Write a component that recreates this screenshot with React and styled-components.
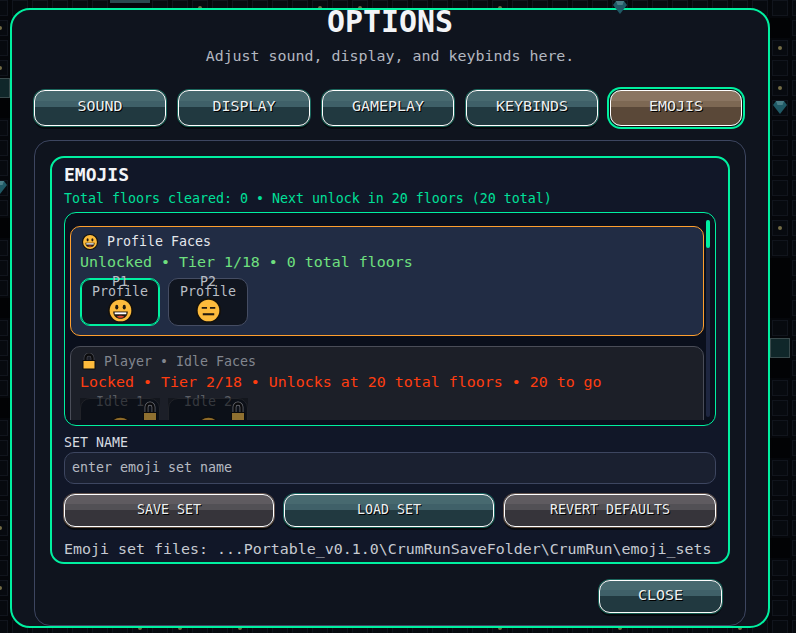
import React from 'react'
import styled, { createGlobalStyle, css } from 'styled-components'

const GREEN = '#00f0a0'

const GlobalStyle = createGlobalStyle`
  html, body {
    margin: 0;
    padding: 0;
    background: #05070b;
    overflow: hidden;
  }
  * { box-sizing: border-box; }
`

const Page = styled.div`
  position: relative;
  width: 796px;
  height: 633px;
  overflow: hidden;
  padding: 8px 26px 5px 10px;
  font-family: "DejaVu Sans Mono", "Liberation Mono", monospace;
`

/* game floor showing behind the dialog */
const Board = styled.div`
  position: absolute;
  left: -10px;
  top: -2px;
  display: grid;
  grid-template-columns: repeat(41, 20px);
  grid-auto-rows: 20px;
`

const Cell = styled.div`
  position: relative;
  ${p => p.$kind === 'black' && css`
    background: #020305;
  `}
  ${p => p.$kind === 'teal' && css`
    background: #10272a;
    border: 1px solid #3a4a4c;
  `}
  ${p => (p.$kind === 'tile' || p.$kind === 'dot' || p.$kind === 'gem') && css`
    &::before {
      content: '';
      position: absolute;
      inset: 2px;
      border: 1px solid #11151d;
      background: #070a0f;
    }
  `}
  ${p => p.$kind === 'slab' && css`
    background: linear-gradient(#2a4a50 5px, transparent 5px);
  `}
  ${p => p.$kind === 'dot' && css`
    &::after {
      content: '';
      position: absolute;
      left: 8px;
      top: 8px;
      width: 4px;
      height: 4px;
      border-radius: 50%;
      background: #736c45;
    }
  `}
`

const Gem = styled.svg`
  position: absolute;
  left: 3px;
  top: 2px;
  z-index: 1;
`

const Modal = styled.div`
  position: relative;
  width: 760px;
  height: 620px;
  overflow: hidden;
  display: flex;
  flex-direction: column;
  padding: 0 22px;
  background: #0f141e;
  border: 2px solid ${GREEN};
  border-radius: 20px;
`

const Title = styled.h1`
  margin: 0;
  font-size: 29.9px;
  line-height: 24px;
  font-weight: 700;
  text-align: center;
  color: #f3f4f7;
`

const Subtitle = styled.p`
  margin: 13px 0 0;
  font-size: 14.95px;
  line-height: 18px;
  text-align: center;
  color: #b3b7c0;
`

const Tabs = styled.div`
  display: flex;
  gap: 12px;
  margin-top: 25px;
`

const palettes = {
  teal: { light: '#47696f', mid: '#3f6068', dark: '#213940', edge: '#2ee0b8' },
  warm: { light: '#5f5b60', mid: '#525055', dark: '#36343a', edge: '#e0b48a' },
  active: { light: '#8a7561', mid: '#7d6853', dark: '#5a4838', edge: '#f0c8a0' },
}

const Button = styled.button`
  flex: 0 0 auto;
  width: ${p => p.$width}px;
  height: ${p => p.$height}px;
  padding: 0 0 ${p => p.$lift}px;
  font-family: inherit;
  font-size: ${p => p.$size}px;
  color: #eef1f2;
  text-shadow: 1px 1px 0 #000;
  border-radius: 11px;
  border: 1px solid #ffffff;
  background: linear-gradient(
    ${p => palettes[p.$tone].light} 0,
    ${p => palettes[p.$tone].light} 30%,
    ${p => palettes[p.$tone].mid} 30%,
    ${p => palettes[p.$tone].mid} 47%,
    ${p => palettes[p.$tone].dark} 47%
  );
  box-shadow: 0 0 0 1px ${p => palettes[p.$tone].edge}66, 0 3px 0 #05080d;
  ${p => p.$selected && css`
    box-shadow: 0 0 0 1px #0a0e14, 0 0 0 3px ${GREEN};
  `}
`

const Panel = styled.div`
  flex: 1;
  display: flex;
  flex-direction: column;
  margin-top: 14px;
  padding: 15px 15px 12px;
  border: 1px solid #3d4660;
  border-radius: 16px;
`

const EmojiBox = styled.section`
  display: flex;
  flex-direction: column;
  padding: 6px 12px 4px;
  background: #111728;
  border: 2px solid ${GREEN};
  border-radius: 14px;
`

const BoxTitle = styled.h2`
  margin: 0;
  font-size: 18px;
  line-height: 22px;
  font-weight: 700;
  color: #f3f4f7;
`

const FloorsLine = styled.div`
  margin-top: 4px;
  font-size: 13.29px;
  line-height: 18px;
  color: #00e09a;
`

const ListBox = styled.div`
  display: flex;
  gap: 2px;
  height: 214px;
  margin-top: 4px;
  padding: 7px 5px 5px;
  background: #0a0f1c;
  border: 1px solid ${GREEN};
  border-radius: 12px;
`

const Cards = styled.div`
  flex: 1;
  min-width: 0;
  overflow: hidden;
  display: flex;
  flex-direction: column;
  gap: 10px;
  padding-top: 6px;
`

const Track = styled.div`
  flex: 0 0 4px;
  height: 197px;
  background: #1e2640;
  border-radius: 2px;
`

const Thumb = styled.div`
  height: 28px;
  background: ${GREEN};
  border-radius: 2px;
`

const Card = styled.article`
  flex: 0 0 auto;
  padding: 6px 9px 9px;
  border-radius: 10px;
  border: 1px solid ${p => (p.$locked ? '#4a4d58' : '#ff9f2e')};
  background: ${p => (p.$locked ? '#1c1f28' : '#212c44')};
`

const CardHead = styled.div`
  display: flex;
  align-items: center;
  gap: ${p => (p.$locked ? 8 : 9)}px;
  height: 17px;
  padding-left: 2px;
  font-size: 13.29px;
  line-height: 17px;
  color: ${p => (p.$locked ? '#82868f' : '#e4e7ec')};
`

const Status = styled.div`
  margin-top: 3px;
  font-size: 14.95px;
  line-height: 18px;
  color: ${p => (p.$locked ? '#ff3d10' : '#6fe07f')};
`

const Tiles = styled.div`
  display: flex;
  gap: 8px;
  margin-top: 7px;
`

const Tile = styled.div`
  position: relative;
  width: 80px;
  height: 48px;
  display: flex;
  flex-direction: column;
  align-items: center;
  border-radius: 10px;
  border: 1px solid ${p => (p.$locked ? '#33353d' : '#454d63')};
  background: #10151f;
  font-size: 13.29px;
  line-height: 12px;
  color: ${p => (p.$locked ? '#5a5d64' : '#b9bdc5')};
  ${p => p.$selected && css`
    border-color: ${GREEN};
    box-shadow: inset 0 0 0 1px ${GREEN};
  `}
`

const TileLabel = styled.span`
  display: block;
  height: 10px;
  white-space: nowrap;
  &:first-child {
    margin-top: -3px;
  }
`

const TileFace = styled.span`
  display: block;
  margin-top: ${p => (p.$locked ? 0 : 2)}px;
  line-height: 0;
`

const Veil = styled.div`
  position: absolute;
  inset: -1px;
  background: rgba(8, 10, 15, 0.45);
`

const VeilLock = styled.svg`
  position: absolute;
  right: 3px;
  top: 2px;
`

const FieldLabel = styled.label`
  display: block;
  margin-top: 9px;
  font-size: 13.29px;
  line-height: 16px;
  color: #d8dbe1;
`

const NameInput = styled.input`
  display: block;
  width: 100%;
  height: 32px;
  margin-top: 1px;
  padding: 0 7px 2px;
  font-family: inherit;
  font-size: 13.29px;
  color: #d8dbe1;
  background: #1a2030;
  border: 1px solid #3d4660;
  border-radius: 10px;
  outline: none;
  &::placeholder {
    color: #b5b9c2;
    opacity: 1;
  }
`

const SetActions = styled.div`
  display: flex;
  gap: 10px;
  margin-top: 10px;
`

const PathLine = styled.div`
  margin-top: 13px;
  font-size: 14.95px;
  line-height: 18px;
  white-space: nowrap;
  color: #c6cad1;
`

const Footer = styled.div`
  display: flex;
  justify-content: flex-end;
  margin-top: 16px;
  padding-right: 8px;
`

function FaceIcon({ kind, size }) {
  return (
    <svg width={size} height={size} viewBox="0 0 24 24">
      <circle cx="12" cy="12" r="12" fill="#14110c" />
      <circle cx="12" cy="12" r="10.4" fill="#fdbb3c" />
      {kind === 'grin' ? (
        <>
          <ellipse cx="8.4" cy="8.8" rx="1.5" ry="2.3" fill="#231a10" />
          <ellipse cx="15.6" cy="8.8" rx="1.5" ry="2.3" fill="#231a10" />
          <path d="M5 13 H19 C19 17.4 16 20 12 20 C8 20 5 17.4 5 13 Z" fill="#231a10" />
          <path d="M6.4 13.8 H17.6 V15.6 H6.4 Z" fill="#ffffff" />
          <path d="M8.5 18 C10 16.8 14 16.8 15.5 18 C14 19.4 10 19.4 8.5 18 Z" fill="#e8482f" />
        </>
      ) : (
        <>
          <path d="M5.5 8.6 H10.6 V10.4 H5.5 Z M13.4 8.6 H18.5 V10.4 H13.4 Z" fill="#231a10" />
          <path d="M6.5 14.6 H17.5 V16.6 H6.5 Z" fill="#231a10" />
        </>
      )}
    </svg>
  )
}

function LockIcon() {
  return (
    <svg width="14" height="17" viewBox="0 0 14 17">
      <path d="M3.5 8 V5 A3.5 3.5 0 0 1 10.5 5 V8" fill="none" stroke="#50525a" strokeWidth="3.6" />
      <path d="M3.5 8 V5 A3.5 3.5 0 0 1 10.5 5 V8" fill="none" stroke="#0b0b0d" strokeWidth="2.4" />
      <rect x="0.5" y="7" width="13" height="9.5" rx="1" fill="#0b0b0d" />
      <rect x="1.5" y="8" width="11" height="7.5" fill="#fdbb3c" />
    </svg>
  )
}

function Tab({ label, selected }) {
  return (
    <Button $width={132} $height={36} $lift={4} $size={14.95} $tone={selected ? 'active' : 'teal'} $selected={selected}>
      {label}
    </Button>
  )
}

const floorCells = {
  '1,0': 'dot', '3,0': 'dot', '4,0': 'teal', '5,0': 'black', '9,0': 'gem', '11,0': 'black',
  '0,6': 'slab', '0,7': 'slab', '0,10': 'dot', '0,16': 'dot', '0,18': 'dot', '0,25': 'dot', '0,31': 'gem',
  '2,39': 'dot', '4,39': 'dot', '5,39': 'gem', '11,39': 'dot', '13,39': 'black', '14,39': 'black',
  '15,39': 'black', '17,39': 'teal', '18,39': 'black', '1,39': 'black', '22,39': 'black', '27,39': 'black',
  '31,7': 'dot', '31,9': 'dot', '31,12': 'dot', '31,25': 'dot', '31,31': 'dot', '31,37': 'dot',
  '26,0': 'dot', '29,0': 'dot', '15,0': 'black', '20,0': 'black',
}

function Floor() {
  const cells = []
  for (let r = 0; r < 33; r++) {
    for (let c = 0; c < 41; c++) {
      const kind = floorCells[`${r},${c}`] || 'tile'
      cells.push(
        <Cell key={`${r}-${c}`} $kind={kind}>
          {kind === 'gem' && (
            <Gem width="14" height="14" viewBox="0 0 14 14">
              <path d="M3 1 H11 L14 5 L7 14 L0 5 Z" fill="#1f5a66" />
              <path d="M3 1 H11 L9.5 5 H4.5 Z" fill="#4a7f88" />
            </Gem>
          )}
        </Cell>
      )
    }
  }
  return <Board>{cells}</Board>
}

export default function App() {
  return (
    <Page>
      <GlobalStyle />
      <Floor />
      <Modal>
        <Title>OPTIONS</Title>
        <Subtitle>Adjust sound, display, and keybinds here.</Subtitle>
        <Tabs>
          <Tab label="SOUND" />
          <Tab label="DISPLAY" />
          <Tab label="GAMEPLAY" />
          <Tab label="KEYBINDS" />
          <Tab label="EMOJIS" selected />
        </Tabs>
        <Panel>
          <EmojiBox>
            <BoxTitle>EMOJIS</BoxTitle>
            <FloorsLine>Total floors cleared: 0 • Next unlock in 20 floors (20 total)</FloorsLine>
            <ListBox>
              <Cards>
                <Card>
                  <CardHead>
                    <FaceIcon kind="grin" size={16} />
                    Profile Faces
                  </CardHead>
                  <Status>Unlocked • Tier 1/18 • 0 total floors</Status>
                  <Tiles>
                    <Tile $selected>
                      <TileLabel>P1</TileLabel>
                      <TileLabel>Profile</TileLabel>
                      <TileFace><FaceIcon kind="grin" size={25} /></TileFace>
                    </Tile>
                    <Tile>
                      <TileLabel>P2</TileLabel>
                      <TileLabel>Profile</TileLabel>
                      <TileFace><FaceIcon kind="flat" size={25} /></TileFace>
                    </Tile>
                  </Tiles>
                </Card>
                <Card $locked>
                  <CardHead $locked>
                    <LockIcon />
                    Player • Idle Faces
                  </CardHead>
                  <Status $locked>Locked • Tier 2/18 • Unlocks at 20 total floors • 20 to go</Status>
                  <Tiles>
                    {['Idle 1', 'Idle 2'].map(name => (
                      <Tile $locked key={name}>
                        <TileLabel>{name}</TileLabel>
                        <TileLabel />
                        <TileFace $locked><FaceIcon kind="grin" size={25} /></TileFace>
                        <Veil>
                          <VeilLock width="14" height="22" viewBox="0 0 14 22">
                            <path d="M3.5 12 V7 A3.5 3.5 0 0 1 10.5 7 V12" fill="none" stroke="#74767d" strokeWidth="3.8" />
                            <path d="M3.5 12 V7 A3.5 3.5 0 0 1 10.5 7 V12" fill="none" stroke="#0b0b0d" strokeWidth="2.4" />
                            <rect x="0" y="12" width="14" height="10" fill="#0b0b0d" />
                            <rect x="1" y="13" width="12" height="9" fill="#8f7030" />
                          </VeilLock>
                        </Veil>
                      </Tile>
                    ))}
                  </Tiles>
                </Card>
              </Cards>
              <Track><Thumb /></Track>
            </ListBox>
            <FieldLabel>SET NAME</FieldLabel>
            <NameInput placeholder="enter emoji set name" />
            <SetActions>
              <Button $width={210} $height={33} $lift={2} $size={13.29} $tone="warm">SAVE SET</Button>
              <Button $width={210} $height={33} $lift={2} $size={13.29} $tone="teal">LOAD SET</Button>
              <Button $width={212} $height={33} $lift={2} $size={13.29} $tone="warm">REVERT DEFAULTS</Button>
            </SetActions>
            <PathLine>Emoji set files: ...Portable_v0.1.0\CrumRunSaveFolder\CrumRun\emoji_sets</PathLine>
          </EmojiBox>
          <Footer>
            <Button $width={123} $height={33} $lift={3} $size={14.95} $tone="teal">CLOSE</Button>
          </Footer>
        </Panel>
      </Modal>
    </Page>
  )
}
